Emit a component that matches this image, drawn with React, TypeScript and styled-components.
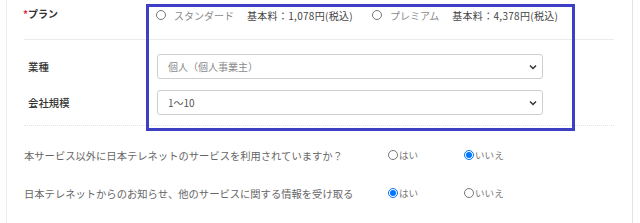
import React from "react";
import styled, { createGlobalStyle } from "styled-components";

const GlobalStyle = createGlobalStyle`
  html, body {
    margin: 0;
    padding: 0;
    background: #ffffff;
  }
  body {
    font-family: "Noto Sans CJK JP", "Noto Sans", sans-serif;
    color: #555;
  }
`;

const questions = [
  {
    text: "本サービス以外に日本テレネットのサービスを利用されていますか？",
    name: "other",
    yes: false,
  },
  {
    text: "日本テレネットからのお知らせ、他のサービスに関する情報を受け取る",
    name: "news",
    yes: true,
  },
];

const Chevron = () => (
  <svg width="8" height="6" viewBox="0 0 8 6">
    <path d="M1 1.5 L4 4.5 L7 1.5" fill="none" stroke="#333" strokeWidth="1.5" />
  </svg>
);

const App = () => {
  return (
    <>
      <GlobalStyle />
      <Page>
        <Panel>
          <PlanRow>
            <PlanLabel>
              <Required>*</Required>プラン
            </PlanLabel>
            <PlanOptions>
              <PlanOption>
                <Radio type="radio" name="plan" />
                <PlanName>スタンダード</PlanName>
                <Price>基本料：1,078円(税込)</Price>
              </PlanOption>
              <PlanOption>
                <Radio type="radio" name="plan" />
                <PlanName>プレミアム</PlanName>
                <Price>基本料：4,378円(税込)</Price>
              </PlanOption>
            </PlanOptions>
          </PlanRow>

          <SelectSection>
            <SelectRow>
              <FieldLabel>業種</FieldLabel>
              <SelectBox>
                <SelectText $muted>個人（個人事業主）</SelectText>
                <Chevron />
              </SelectBox>
            </SelectRow>
            <SelectRow>
              <FieldLabel>会社規模</FieldLabel>
              <SelectBox>
                <SelectText>1〜10</SelectText>
                <Chevron />
              </SelectBox>
            </SelectRow>
          </SelectSection>

          <Questions>
            {questions.map((q) => (
              <QuestionRow key={q.name}>
                <QuestionText>{q.text}</QuestionText>
                <Choice>
                  <Radio type="radio" name={q.name} defaultChecked={q.yes} />
                  はい
                </Choice>
                <Choice>
                  <Radio type="radio" name={q.name} defaultChecked={!q.yes} />
                  いいえ
                </Choice>
              </QuestionRow>
            ))}
          </Questions>

          <Highlight />
        </Panel>
      </Page>
    </>
  );
};

export default App;

const Page = styled.div`
  width: 640px;
  height: 223px;
  overflow: hidden;
  padding-left: 6px;
  box-sizing: border-box;
`;

const Panel = styled.div`
  position: relative;
  width: 627px;
  height: 223px;
  box-sizing: border-box;
  border-left: 1px solid #ececec;
  border-right: 1px solid #e4e4e4;
  padding: 0 18px 0 17px;
`;

const PlanRow = styled.div`
  display: flex;
  height: 40px;
  box-sizing: border-box;
  padding-top: 7px;
  border-bottom: 1px solid #ebebeb;
`;

const PlanLabel = styled.div`
  width: 133px;
  font-size: 10px;
  line-height: 14px;
  font-weight: 700;
  color: #333;
  margin-left: -1px;
`;

const Required = styled.span`
  color: #e0304a;
  font-weight: 700;
`;

const PlanOptions = styled.div`
  display: flex;
  gap: 19px;
`;

const PlanOption = styled.label`
  display: flex;
  align-items: center;
  height: 16px;
  font-size: 10px;
  white-space: nowrap;
`;

const Radio = styled.input`
  width: 10px;
  height: 10px;
  margin: 0 1px 0 0;
  flex-shrink: 0;

  ${PlanOption} & {
    margin-right: 8px;
  }
`;

const PlanName = styled.span`
  color: #8a8a8a;
  margin-right: 13px;
`;

const Price = styled.span`
  color: #444;
  letter-spacing: 0.3px;
`;

const SelectSection = styled.div`
  display: flex;
  flex-direction: column;
  gap: 11px;
  padding: 14px 0 10px;
  border-bottom: 1px dotted #e2e2e2;
`;

const SelectRow = styled.div`
  display: flex;
  align-items: center;
`;

const FieldLabel = styled.div`
  width: 133px;
  padding-left: 4px;
  box-sizing: border-box;
  font-size: 10.4px;
  font-weight: 500;
  color: #333;
`;

const SelectBox = styled.div`
  width: 386px;
  height: 25px;
  box-sizing: border-box;
  border: 1px solid #cfcfcf;
  border-radius: 3px;
  display: flex;
  align-items: center;
  justify-content: space-between;
  padding: 0 5px 0 10px;
`;

const SelectText = styled.span<{ $muted?: boolean }>`
  font-size: 10px;
  color: ${(p) => (p.$muted ? "#8a8a8a" : "#555")};
`;

const Questions = styled.div`
  padding-top: 10px;
`;

const QuestionRow = styled.div`
  display: flex;
  align-items: center;
  height: 38px;
`;

const QuestionText = styled.div`
  width: 364px;
  font-size: 10.3px;
  color: #666;
  white-space: nowrap;
`;

const Choice = styled.label`
  width: 76px;
  display: flex;
  align-items: center;
  font-size: 9.6px;
  color: #777;
`;

const Highlight = styled.div`
  position: absolute;
  left: 139px;
  top: 4px;
  width: 429px;
  height: 127px;
  box-sizing: border-box;
  border: 3px solid #3d40c4;
  pointer-events: none;
`;
